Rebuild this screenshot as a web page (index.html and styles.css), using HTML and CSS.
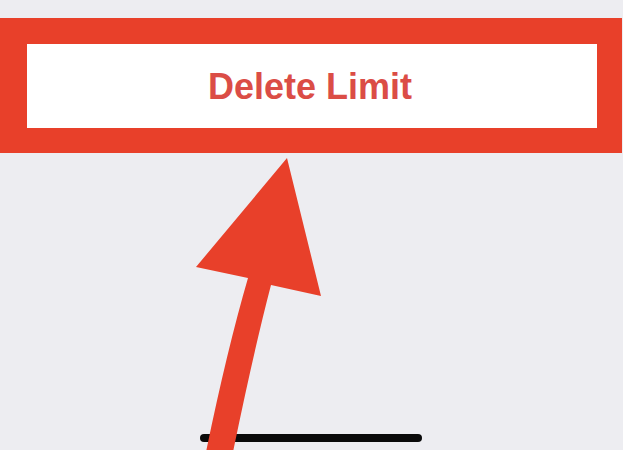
FILE: index.html
```html
<!DOCTYPE html>
<html>
<head>
<meta charset="utf-8">
<link rel="stylesheet" href="styles.css">
</head>
<body>
<div class="screen">
  <div class="frame">
    <div class="action">
      <span class="action-label">Delete Limit</span>
    </div>
  </div>
  <svg class="arrow" width="623" height="450" viewBox="0 0 623 450">
    <path d="M287 158 L321 296 L271 285 Q254 350 233 452 L206 452 Q227 350 248 278 L196 267 Z" fill="#E8402A"/>
  </svg>
  <div class="home-indicator"></div>
</div>
</body>
</html>
```
FILE: styles.css
```css
html, body {
  margin: 0;
  padding: 0;
}
body {
  background: #EDEDF1;
  width: 623px;
  height: 450px;
  overflow: hidden;
}
.screen {
  position: relative;
  width: 623px;
  height: 450px;
  padding-top: 18px;
  box-sizing: border-box;
}
.frame {
  width: 622px;
  box-sizing: border-box;
  border-style: solid;
  border-color: #E8402A;
  border-width: 26px 25px 25px 27px;
}
.action {
  height: 84px;
  background: #FFFFFF;
  display: flex;
  align-items: center;
  justify-content: center;
}
.action-label {
  font-family: "Liberation Sans", Arial, sans-serif;
  font-weight: bold;
  font-size: 36px;
  color: #DB4D46;
  margin-left: -4px;
  margin-top: 1px;
}
.arrow {
  position: absolute;
  left: 0;
  top: 0;
  z-index: 2;
}
.home-indicator {
  position: absolute;
  left: 200px;
  top: 434px;
  width: 222px;
  height: 8px;
  border-radius: 4px;
  background: #0A0A0A;
}
```
